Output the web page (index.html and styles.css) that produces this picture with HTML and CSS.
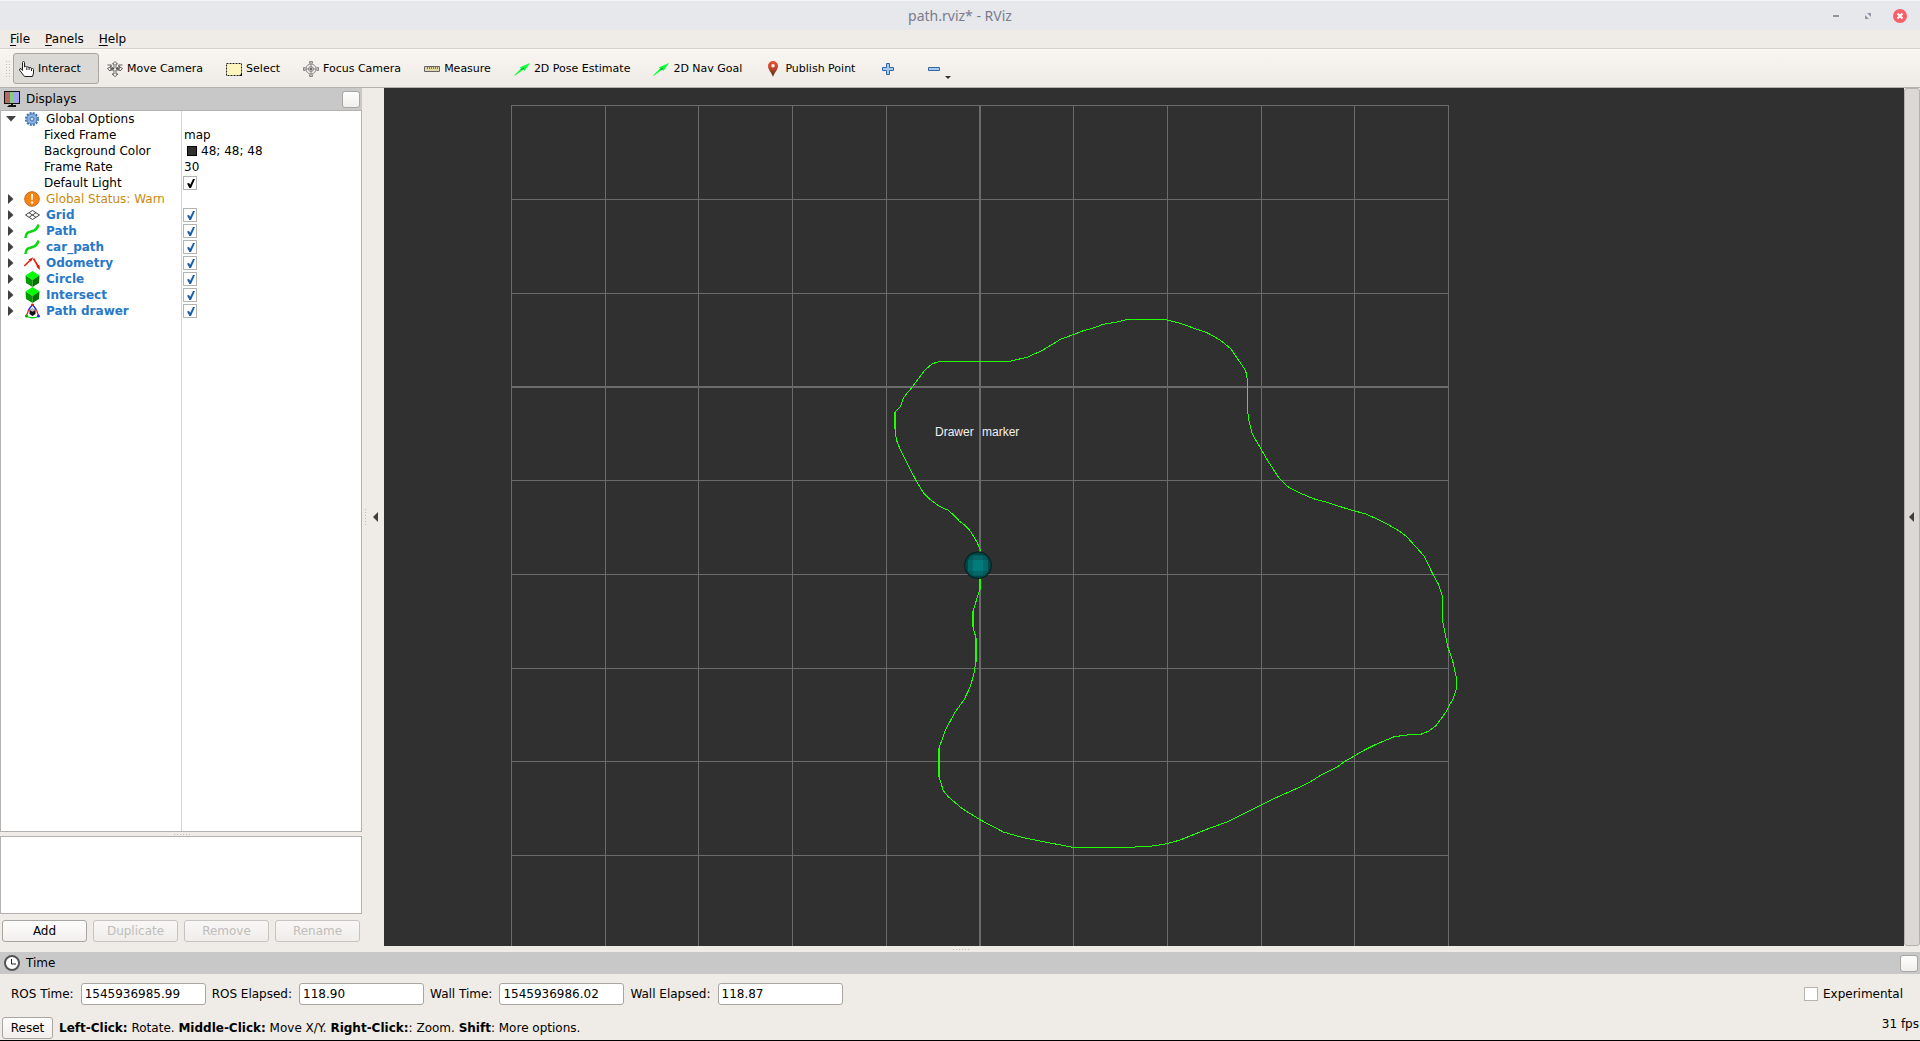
FILE: index.html
```html
<!DOCTYPE html>
<html lang="en">
<head>
<meta charset="utf-8">
<title>path.rviz* - RViz</title>
<link rel="stylesheet" href="styles.css">
</head>
<body>
<svg class="defs" aria-hidden="true">
  <symbol id="i-path" viewBox="0 0 16 16"><path d="M1.500 15C2 9.500 4.500 9 8 8.200S13.500 5.500 14.500 1.500" fill="none" stroke="#0cd60c" stroke-width="2.600"/></symbol>
  <symbol id="i-cube" viewBox="0 0 16 16"><path d="M8.500 0 15.500 4.500 8.500 9 1.500 4.500z" fill="#0f0"/><path d="M1.500 4.500 8.500 9v7L2 12z" fill="#009a00"/><path d="M15.500 4.500 8.500 9v7L15 12z" fill="#007400"/></symbol>
  <symbol id="i-arrow" viewBox="0 0 16 16"><path d="M0 14.500 7 7.500l-1-1.300L16 2l-5.500 8-1-1.500L1.200 14.500z" fill="#0aff3c"/><path d="M6 8.500 10.500 6.500 9.500 8.500z" fill="#0b9c28"/></symbol>
</svg>
<div class="window">
  <header class="titlebar">
    <h1>path.rviz* - RViz</h1>
    <div class="controls">
      <button type="button" aria-label="Minimize"><svg width="14" height="14" viewBox="0 0 14 14"><path d="M4 6h6v2H4z" fill="#9294a3"/></svg></button>
      <button type="button" aria-label="Maximize"><svg width="14" height="14" viewBox="0 0 14 14"><path d="M6 4h4v4zM4 6v4h4z" fill="#9294a3"/></svg></button>
      <button type="button" aria-label="Close"><svg width="14" height="14" viewBox="0 0 14 14"><circle cx="7" cy="7" r="7" fill="#f95e69"/><path d="M4.500 4.500l5 5m0-5l-5 5" stroke="#fff" stroke-width="2"/></svg></button>
    </div>
  </header>
  <nav class="menubar">
    <button type="button"><u>F</u>ile</button>
    <button type="button"><u>P</u>anels</button>
    <button type="button"><u>H</u>elp</button>
  </nav>
  <div class="toolbar" role="toolbar">
    <span class="grip"></span>
    <button type="button" class="tool active"><svg viewBox="0 0 16 16"><path d="M4.500 9.500V1.500q0-1 1-1t1 1V6l1-.7q1.200 0 1.300 1l.9-.5q1.200 0 1.400 1.200l1-.5q1.300 0 1.400 1.300l1-.3q1 0 1 1v3.500l-1 3.500h-8l-5-6.500q0-1.600 1.500-1.500z" fill="#fff" stroke="#222"/><path d="M8.800 6.500V9m2.300-2v2m2.400-1v2" stroke="#222" fill="none"/></svg>Interact</button>
    <button type="button" class="tool"><svg viewBox="0 0 16 16"><g fill="#f5f2ed" stroke="#444" stroke-width=".8"><path d="M8 .5 10.500 3H9v4.500h3.500L12 5.500l3.600 2L13 10V9H9v4h2l-3 2.600L5 13h2V9H3v1L.4 7.500 4 5.500 3.500 7.500H7V3H5.500z"/><path d="M.5 4h4l-1 1.300L7 7.600 3.500 9M15.500 4h-4l1 1.300L9 7.600 12.500 9" fill="none"/></g></svg>Move Camera</button>
    <button type="button" class="tool"><svg viewBox="0 0 16 16"><path d="M.5 2.500h15v12H.5z" fill="#fdf5be" stroke="#222" stroke-dasharray="2 1"/><path d="M16 12v3h-3z" fill="#000"/></svg>Select</button>
    <button type="button" class="tool"><svg viewBox="0 0 16 16"><g fill="none" stroke="#888"><circle cx="8" cy="8" r="5"/><circle cx="8" cy="8" r="2.500"/><path d="M8 0v16M0 8h16M6.500 2.500V.5h3v2M6.500 13.500v2h3v-2M2.500 6.500h-2v3h2M13.500 6.500h2v3h-2"/></g><path d="M7 7h2v2H7z" fill="#666"/></svg>Focus Camera</button>
    <button type="button" class="tool"><svg viewBox="0 0 16 16"><path d="M.5 5.500h15v5H.5z" fill="#ded7a5" stroke="#666"/><path d="M3.500 6v2m2-2v2m2-2v2m2-2v2m2-2v2m2-2v2" stroke="#777"/></svg>Measure</button>
    <button type="button" class="tool"><svg><use href="#i-arrow"/></svg>2D Pose Estimate</button>
    <button type="button" class="tool"><svg><use href="#i-arrow"/></svg>2D Nav Goal</button>
    <button type="button" class="tool"><svg viewBox="0 0 16 16"><defs><linearGradient id="pin" x2="0" y2="1"><stop stop-color="#f0502e"/><stop offset=".5" stop-color="#b9442c"/><stop offset="1" stop-color="#3b2a12"/></linearGradient></defs><path d="M8 16C7 12 3 9 3 5a5 5 0 0 1 10 0c0 4-4 7-5 11z" fill="url(#pin)"/><circle cx="8" cy="4.700" r="1.800" fill="#f7efe9"/></svg>Publish Point</button>
    <button type="button" class="tool icon" aria-label="Add tool"><svg viewBox="0 0 16 16"><path d="M6.500 2.500h3v4h4v3h-4v4h-3v-4h-4v-3h4z" fill="#a5c8ec" stroke="#3567a8"/></svg></button>
    <button type="button" class="tool icon drop" aria-label="Remove tool"><svg viewBox="0 0 16 16"><path d="M2.500 6.500h11v3h-11z" fill="#a5c8ec" stroke="#3567a8"/></svg></button>
  </div>

  <main class="workspace">
    <section class="displays">
      <div class="dock-title">
        <svg viewBox="0 0 16 16"><path d="M0 0h16v13H0z" fill="#111"/><path d="M1 1h5v11H1z" fill="#b96565"/><path d="M6 1h4v11H6z" fill="#7fd07f"/><path d="M10 1h5v11h-5z" fill="#a5a2ec"/><path d="M7 13h2v1h3v2H3l2-2h2z" fill="#111"/></svg>
        <h2>Displays</h2><button type="button" class="float" aria-label="Float displays panel"></button>
      </div>
      <div class="tree">
        <table>
          <colgroup><col class="c-name"><col></colgroup>
          <tbody>
          <tr><th><div><button type="button" class="twist open" aria-label="Collapse"></button><svg viewBox="0 0 16 16"><circle cx="8" cy="8" r="6" fill="none" stroke="#3d6fb0" stroke-width="2" stroke-dasharray="2 1.140"/><circle cx="8" cy="8" r="5" fill="#8db3df" stroke="#4f80bd"/><circle cx="8" cy="8" r="2" fill="#c5daf0" stroke="#3d6fb0"/></svg>Global Options</div></th><td></td></tr>
          <tr class="child"><th>Fixed Frame</th><td>map</td></tr>
          <tr class="child"><th>Background Color</th><td><span class="swatch"></span>48; 48; 48</td></tr>
          <tr class="child"><th>Frame Rate</th><td>30</td></tr>
          <tr class="child"><th><label for="light">Default Light</label></th><td><input type="checkbox" id="light" checked></td></tr>
          <tr class="warn"><th><div><button type="button" class="twist" aria-label="Expand"></button><svg viewBox="0 0 16 16"><circle cx="8" cy="8" r="7.300" fill="#f68412" stroke="#c46a1d"/><path d="M7 3h2l-.3 6H7.300z" fill="#fff"/><circle cx="8" cy="11.500" r="1.200" fill="#fff"/></svg>Global Status: Warn</div></th><td></td></tr>
          <tr class="display"><th><div><button type="button" class="twist" aria-label="Expand"></button><svg viewBox="0 0 16 16"><path d="M1.500 8 8.500 3.500 15.500 8 8.500 12.500zM5 5.700l7 4.600M12 5.700 5 10.300" fill="none" stroke="#444"/></svg><label for="d1">Grid</label></div></th><td><input type="checkbox" id="d1" checked></td></tr>
          <tr class="display"><th><div><button type="button" class="twist" aria-label="Expand"></button><svg><use href="#i-path"/></svg><label for="d2">Path</label></div></th><td><input type="checkbox" id="d2" checked></td></tr>
          <tr class="display"><th><div><button type="button" class="twist" aria-label="Expand"></button><svg><use href="#i-path"/></svg><label for="d3">car_path</label></div></th><td><input type="checkbox" id="d3" checked></td></tr>
          <tr class="display"><th><div><button type="button" class="twist" aria-label="Expand"></button><svg viewBox="0 0 16 16"><path d="M.3 11 6 5.500M9.500 3.500 15 13" stroke="#ee1c12" stroke-width="1.600" fill="none"/><path d="M4.500 4.500 9.300 2.300 7 6.800zM16 15l-.8-5.500-2.800 2z" fill="#d8150c"/></svg><label for="d4">Odometry</label></div></th><td><input type="checkbox" id="d4" checked></td></tr>
          <tr class="display"><th><div><button type="button" class="twist" aria-label="Expand"></button><svg><use href="#i-cube"/></svg><label for="d5">Circle</label></div></th><td><input type="checkbox" id="d5" checked></td></tr>
          <tr class="display"><th><div><button type="button" class="twist" aria-label="Expand"></button><svg><use href="#i-cube"/></svg><label for="d6">Intersect</label></div></th><td><input type="checkbox" id="d6" checked></td></tr>
          <tr class="display"><th><div><button type="button" class="twist" aria-label="Expand"></button><svg viewBox="0 0 16 16"><g fill="none" stroke-width="1.300"><path d="M8.500 1.500 4.500 7M8.500 1.500l4 5.500" stroke="#22f"/><path d="M4.500 7 2.500 13M12.500 7l2 6" stroke="#e22"/><path d="M3 13.500Q8.500 16 14 13.500" stroke="#0c0"/></g><circle cx="2.500" cy="13" r="1.500" fill="#0a0"/><circle cx="14.500" cy="13" r="1.500" fill="#22f"/><circle cx="8.500" cy="1.700" r="1.300" fill="#c22"/><path d="M8.500 5.500 11.500 7v4l-3 2-3-2V7z" fill="#111"/><path d="M8.500 5.500 11.500 7l-3 1.700-3-1.700z" fill="#bbb"/></svg><label for="d7">Path drawer</label></div></th><td><input type="checkbox" id="d7" checked></td></tr>
          </tbody>
        </table>
      </div>
      <div class="hsplit"></div>
      <div class="description"></div>
      <div class="actions">
        <button type="button" class="btn">Add</button>
        <button type="button" class="btn" disabled>Duplicate</button>
        <button type="button" class="btn" disabled>Remove</button>
        <button type="button" class="btn" disabled>Rename</button>
      </div>
    </section>
    <div class="vsplit"></div>
    <button type="button" class="collapse" aria-label="Hide left dock"></button>
    <svg class="view" viewBox="384 88 1520 858" preserveAspectRatio="xMidYMid slice">
      <g class="grid">
        <path d="M511.500 105V960M605.500 105V960M698.500 105V960M792.500 105V960M886.500 105V960M1073.500 105V960M1167.500 105V960M1261.500 105V960M1354.500 105V960M1448.500 105V960"/>
        <path d="M511 105.500H1449M511 199.500H1449M511 293.500H1449M511 480.500H1449M511 574.500H1449M511 668.500H1449M511 761.500H1449M511 855.500H1449"/>
        <path class="axis" d="M980 105V960M511 387H1449"/>
      </g>
      <polyline class="route" points="980.7,551 977.3,542.7 975,538.7 970,530.7 964,524.7 959.3,521 955,516.3 948.3,510.3 940,506.7 929.3,499 923.3,492.7 916.7,481.7 910,469 901.7,452.7 897.3,442.7 895.7,436 895,428.3 895,412 900.7,406 903.7,397.3 911.7,387.7 925,370 932.3,363.7 939.3,361.5 1009.3,361.5 1027.7,357 1041.7,350.7 1061,339 1073.3,334.7 1083.3,330.7 1093.3,328 1103.3,324.3 1116.7,322 1127.3,319.5 1165,319.5 1180,323.3 1208.3,333.3 1220,340 1230.7,348.7 1245.7,370.7 1247.3,380 1247.5,410.7 1249.3,422.7 1252.3,434 1268.3,461.7 1279.7,479 1288.3,487 1298.3,492.3 1313.3,498.7 1328.3,502.7 1346.7,508.7 1366.7,514.3 1381.7,521.3 1396.7,529.3 1406.7,536.7 1424.3,556.3 1432.7,574 1438.3,584 1442.3,595.7 1442.7,621 1447.7,646.7 1452.7,661 1456.3,677.7 1456.5,689 1453.3,698.3 1445.7,712.3 1436,725.7 1428.3,731.3 1420.7,734.3 1409.3,734.7 1394.3,736.7 1376.7,744 1365,749.7 1344.3,761.7 1336.7,767.3 1320,775.7 1310,782 1295,789.3 1270,800.3 1240,815.7 1226.7,822 1206.7,829.3 1180,840 1167,843.7 1151,846.2 1125,847.5 1073.3,847.5 1023.3,837.7 1003.3,832 980,819.7 961.7,808.3 948.3,796.7 943.3,790.7 939,776.7 939,748.3 945,731 954.3,713.3 964,699.7 970.3,686.7 974,673.3 976,661.7 976,638.3 973,626.7 973,611 979.7,590 980.3,579"/>
      <path class="route thick" d="M895 412V429M939 748V777M976 638V662M973 611V627M980 579V590"/>
      <g>
        <circle cx="978" cy="565.300" r="13.800" fill="#031f20"/>
        <circle cx="978" cy="565.300" r="12.800" fill="#044446"/>
        <path d="M971 555.500h14l3 4v12l-3 4h-14l-3-4v-12z" fill="#05595a"/>
        <path d="M973 555.500h10v20h-10z" fill="#046768"/>
        <path d="M968 560h20v11h-20z" fill="#046768"/>
        <path d="M973 560h10v11h-10z" fill="#007c7c"/>
      </g>
      <text x="935" y="436">Drawer <tspan x="982">marker</tspan></text>
    </svg>
    <button type="button" class="collapse raised" aria-label="Hide right dock"></button>
  </main>
  <div class="hsplit wide"></div>

  <section class="time">
    <div class="dock-title">
      <svg viewBox="0 0 16 16"><circle cx="8" cy="8" r="7" fill="#fff" stroke="#555" stroke-width="2"/><path d="M7.500 4v5H12" fill="none" stroke="#222"/></svg>
      <h2>Time</h2><button type="button" class="float" aria-label="Float time panel"></button>
    </div>
    <form class="fields">
      <label for="rt">ROS Time:</label><input type="text" id="rt" value="1545936985.99" readonly>
      <label for="re">ROS Elapsed:</label><input type="text" id="re" value="118.90" readonly>
      <label for="wt">Wall Time:</label><input type="text" id="wt" value="1545936986.02" readonly>
      <label for="we">Wall Elapsed:</label><input type="text" id="we" value="118.87" readonly>
      <label class="exp"><input type="checkbox">Experimental</label>
    </form>
  </section>
  <footer class="status">
    <button type="button" class="btn">Reset</button>
    <p><b>Left-Click:</b> Rotate. <b>Middle-Click:</b> Move X/Y. <b>Right-Click:</b>: Zoom. <b>Shift</b>: More options.</p>
    <output>31 fps</output>
  </footer>
</div>
</body>
</html>
```
FILE: styles.css
```css
* { box-sizing: border-box; }

body {
  margin: 0;
  background: #efebe7;
  color: #000;
  font: 12px/16px "DejaVu Sans", sans-serif;
}

button, input { font: inherit; color: inherit; }

button {
  margin: 0;
  padding: 0;
  border: 0;
  background: none;
}

.defs { position: absolute; width: 0; height: 0; }

.window {
  display: flex;
  flex-direction: column;
  height: 100vh;
  border-bottom: 1px solid #000;
}

/* Title bar and menus */
.titlebar {
  display: grid;
  grid-template-columns: 1fr auto 1fr;
  align-items: center;
  height: 30px;
  padding: 0 13px;
  background: #e6e8ec;
  border-top: 1px solid #f3f4f6;
}

.titlebar h1 {
  grid-column: 2;
  margin: 0;
  font: 14px/18px "Noto Sans", sans-serif;
  color: #7a7c8c;
}

.controls { display: flex; justify-content: flex-end; gap: 18px; }
.controls svg { display: block; }

.menubar {
  display: flex;
  gap: 15px;
  height: 19px;
  padding-left: 10px;
  border-bottom: 1px solid #d5d1cb;
}

.menubar u { text-underline-offset: 2px; }

/* Toolbar */
.toolbar {
  display: flex;
  align-items: center;
  height: 39px;
  padding: 3px 0 3px 5px;
  background: linear-gradient(#f9f6f1, #eeebe6);
  border-top: 1px solid #fcfaf6;
  border-bottom: 1px solid #b5b1ad;
  font-size: 11px;
}

.grip {
  width: 5px;
  height: 17px;
  margin-right: 3px;
  background: radial-gradient(circle, #c2beb9 1px, transparent 1px) 0 0 / 3px 3px;
}

.tool {
  display: flex;
  align-items: center;
  gap: 4px;
  height: 31px;
  padding: 0 17px 0 4px;
  border: 1px solid transparent;
  border-radius: 3px;
}

.tool svg { width: 16px; height: 16px; }
.tool.active { margin-right: 3px; background: #dbd9d5; border-color: #a9a6a2; }
.tool.icon { padding: 0 22px 0 6px; }

.tool.drop { position: relative; }
.tool.drop::after {
  content: "";
  position: absolute;
  right: 13px;
  bottom: 4px;
  border: 3px solid transparent;
  border-top-color: #333;
  border-bottom: 0;
}

/* Dock panels */
.workspace { display: flex; flex: 1; min-height: 0; }

.displays { display: flex; flex-direction: column; width: 362px; }

.dock-title {
  display: flex;
  align-items: center;
  height: 22px;
  padding: 0 2px 0 4px;
  background: #c8c8c8;
}

.dock-title svg { width: 16px; height: 16px; }
.dock-title h2 { flex: 1; margin: 0 0 0 6px; font: inherit; }

.float, .btn {
  border: 1px solid #a8a5a2;
  border-radius: 3px;
  background: linear-gradient(#fefefe, #f1efec);
}

.float { width: 18px; height: 17px; }

.tree {
  flex: 1;
  min-height: 0;
  border: 1px solid #b4b1ae;
  background: linear-gradient(#d5d5d5, #d5d5d5) 180px 0 / 1px 100% no-repeat #fff;
}

.tree table { width: 100%; border-collapse: collapse; table-layout: fixed; }
.c-name { width: 181px; }
.tree tr { height: 16px; }
.tree th, .tree td { padding: 0; font-weight: normal; text-align: left; white-space: nowrap; }
.tree td { padding-left: 2px; }
.tree td input { margin-left: -1px; }
.tree th div { display: flex; align-items: center; height: 16px; padding-left: 5px; }
.tree th svg { flex: none; width: 16px; height: 16px; margin: 0 6px 0 8px; }
.tree .child th { padding-left: 43px; }
.tree .warn { color: #c8890f; }
.tree .display th { font-weight: bold; color: #2878c8; }

.twist {
  width: 10px;
  height: 10px;
  background: #404040;
  clip-path: polygon(20% 0, 75% 50%, 20% 100%);
}

.twist.open { clip-path: polygon(0 20%, 100% 20%, 50% 75%); }

.swatch {
  display: inline-block;
  width: 10px;
  height: 10px;
  margin: 0 4px 0 3px;
  border: 1px solid #000;
  background: #303030;
  vertical-align: -1px;
}

input[type="checkbox"] {
  appearance: none;
  display: block;
  width: 14px;
  height: 14px;
  margin: 0;
  border: 1px solid #b5b2af;
  background: #fff;
}

input[type="checkbox"]:checked::before {
  content: "";
  display: block;
  width: 8px;
  height: 9px;
  margin: 2px 3px;
  background: #000;
  clip-path: polygon(0 50%, 25% 45%, 40% 65%, 75% 0, 100% 0, 50% 100%, 30% 100%);
}

.display input[type="checkbox"]:checked::before { background: #1b5fa8; }

.hsplit {
  align-self: center;
  width: 17px;
  height: 4px;
  background: linear-gradient(90deg, #c0bcb7 1px, transparent 1px) center / 3px 1px repeat-x;
}

.hsplit.wide { height: 6px; }

.description { height: 78px; border: 1px solid #b4b1ae; background: #fff; }

.actions {
  display: grid;
  grid-template-columns: repeat(4, 1fr);
  gap: 6px;
  padding: 6px 2px 4px;
}

.btn { height: 22px; line-height: 18px; }
.btn:disabled { color: #bfbdba; border-color: #c6c3c0; background: linear-gradient(#f8f7f6, #efedea); }

.vsplit {
  width: 6px;
  height: 17px;
  align-self: center;
  background: linear-gradient(#c0bcb7 1px, transparent 1px) 3px 0 / 1px 3px repeat-y;
}

.collapse { display: grid; place-items: center; width: 16px; padding-right: 2px; }
.collapse::before {
  content: "";
  border: 5px solid transparent;
  border-right-color: #403e3c;
  border-left: 0;
}

.collapse.raised { background: #dbd9d5; border: 1px solid #b4b1ae; border-radius: 3px; }

/* 3D view */
.view { flex: 1; min-width: 0; height: 100%; background: #303030; }
.grid path { fill: none; stroke: #6b6b6b; shape-rendering: crispEdges; }
.grid .axis { stroke-width: 2px; }
.route { fill: none; stroke: #1eff00; shape-rendering: crispEdges; }
.route.thick { stroke-width: 2px; }
.view text { fill: #f0f0f0; font: 12px "Liberation Sans", sans-serif; }

/* Time panel */
.fields { display: flex; align-items: center; gap: 6px; height: 40px; padding: 0 17px 0 11px; }
.fields label[for] { padding-right: 1px; }

.fields input[type="text"] {
  width: 125px;
  height: 22px;
  padding: 0 3px;
  border: 1px solid #a8a5a2;
  border-radius: 3px;
  background: #fff;
}

.exp { display: flex; align-items: center; gap: 5px; margin-left: auto; }

.status { display: flex; align-items: center; gap: 6px; height: 26px; padding: 2px 1px 0 2px; }
.status .btn { width: 51px; }
.status p { flex: 1; margin: 0; }
.status output { align-self: flex-start; }
```
